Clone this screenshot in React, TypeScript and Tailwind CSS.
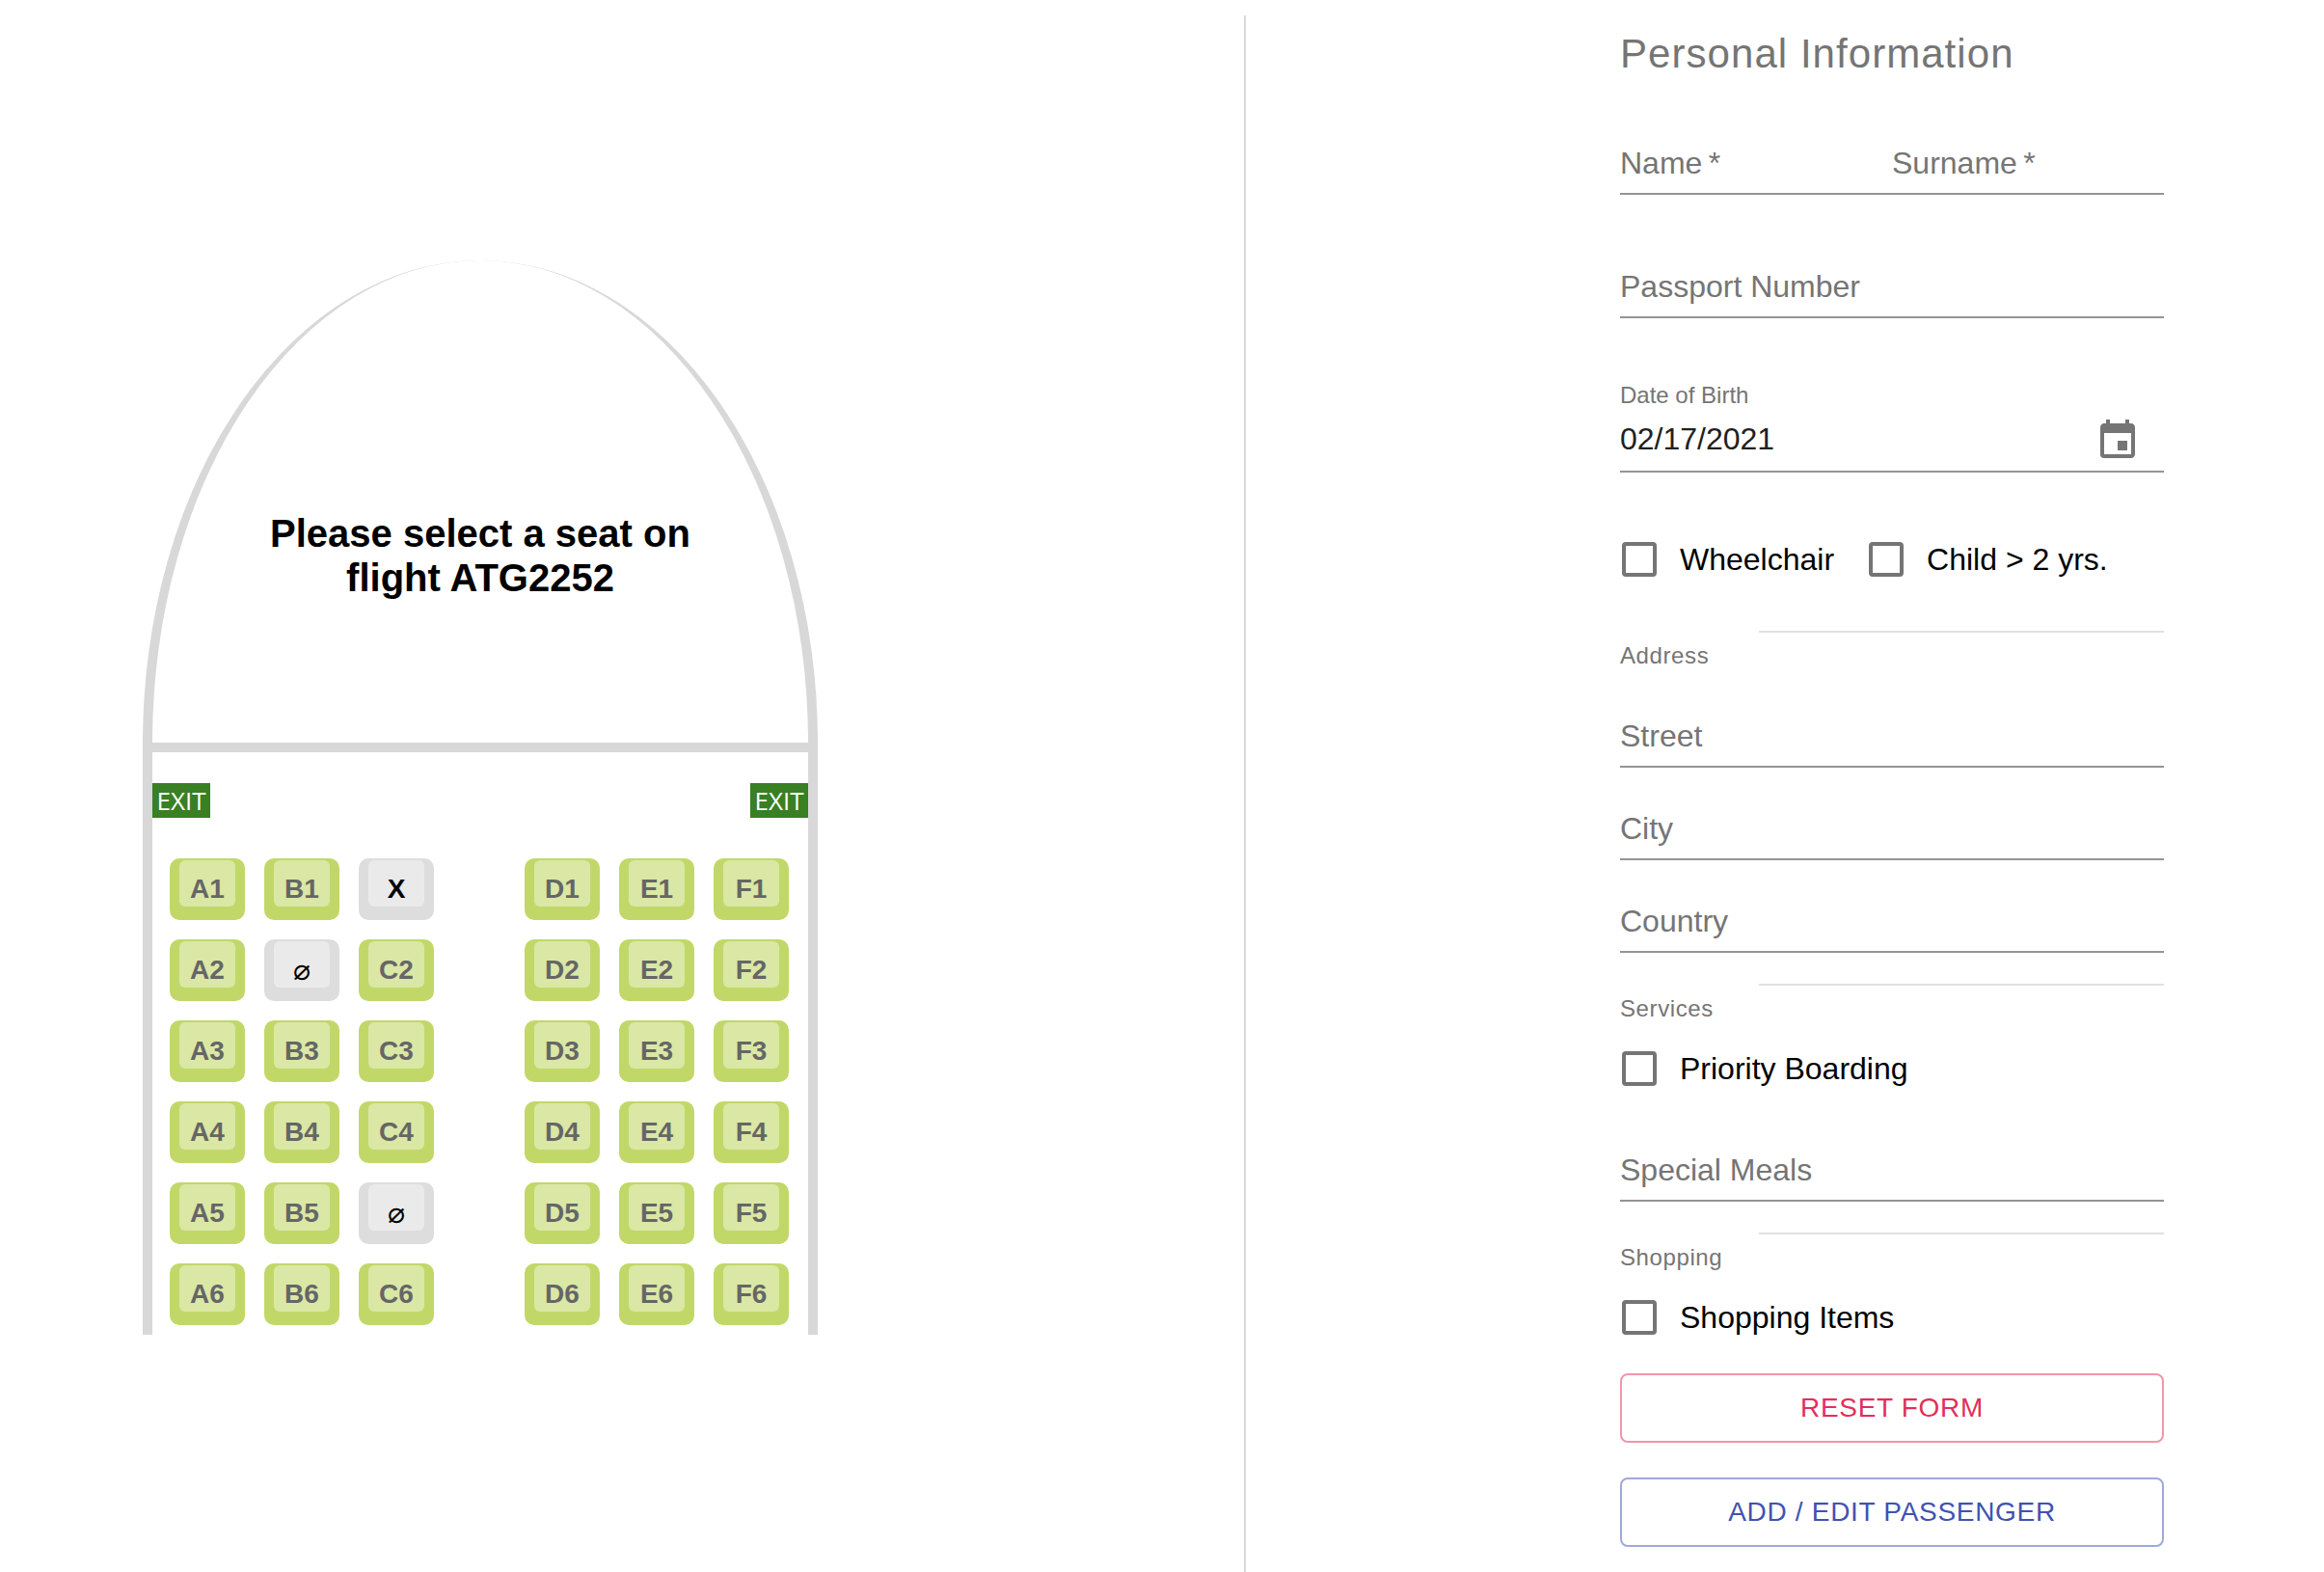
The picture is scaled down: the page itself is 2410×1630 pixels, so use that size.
import React from "react";
import { MdEvent } from "react-icons/md";

type SeatState = "free" | "taken" | "blocked";

const ROWS = [1, 2, 3, 4, 5, 6];
const LEFT_COLUMNS = ["A", "B", "C"];
const RIGHT_COLUMNS = ["D", "E", "F"];

const UNAVAILABLE: Record<string, SeatState> = {
  C1: "taken",
  B2: "blocked",
  C5: "blocked",
};

function Seat({ id }: { id: string }) {
  const state = UNAVAILABLE[id] ?? "free";
  const free = state === "free";
  return (
    <label
      className={
        free
          ? "relative flex h-16 w-[78px] cursor-pointer justify-center rounded-[10px] bg-[#c1d869] pt-0.5 text-[#666666]"
          : "relative flex h-16 w-[78px] justify-center rounded-[10px] bg-[#dddddd] pt-0.5 text-black"
      }
    >
      <input type="checkbox" name="seat" value={id} disabled={!free} aria-label={`Seat ${id}`} className="sr-only" />
      <span className="flex h-12 w-[58px] items-end justify-center rounded-md bg-white/40">
        {state === "blocked" ? (
          <span className="font-['DejaVu_Sans',sans-serif] text-[30px] leading-9">⌀</span>
        ) : (
          <span className="text-[28px] leading-9 font-bold">{state === "taken" ? "X" : id}</span>
        )}
      </span>
    </label>
  );
}

function ExitSign() {
  return (
    <span className="flex h-9 w-[60px] items-center justify-center bg-[#388023] font-['Open_Sans',sans-serif] text-[26px] leading-9 text-white">
      EXIT
    </span>
  );
}

function Plane() {
  return (
    <div className="w-[700px]">
      <div className="flex h-[510px] justify-center border-x-[10px] border-b-[10px] border-[#d8d8d8] pt-[260px] [border-radius:50%_50%_0_0/500px_500px_0_0]">
        <h1 className="w-[480px] text-center text-[40px] leading-[46px] font-bold text-black">
          Please select a seat on flight ATG2252
        </h1>
      </div>
      <div className="border-x-[10px] border-[#d8d8d8] pt-8">
        <div className="flex justify-between">
          <ExitSign />
          <ExitSign />
        </div>
        <ol className="pt-8">
          {ROWS.map((row) => (
            <li key={row} className="flex justify-between py-2.5 pr-5 pl-[18px]">
              <div className="flex gap-5">
                {LEFT_COLUMNS.map((c) => (
                  <Seat key={c} id={`${c}${row}`} />
                ))}
              </div>
              <div className="flex gap-5">
                {RIGHT_COLUMNS.map((c) => (
                  <Seat key={c} id={`${c}${row}`} />
                ))}
              </div>
            </li>
          ))}
        </ol>
      </div>
    </div>
  );
}

function Field({ label, name, required }: { label: string; name: string; required?: boolean }) {
  return (
    <label className="grid h-16 grow basis-0 cursor-text border-b-2 border-[#949494] pt-3 text-[32px] leading-[38px] text-[#757575]">
      <span className="[grid-area:1/1]">
        {label}
        {required ? "\u2009*" : ""}
      </span>
      <input
        type="text"
        name={name}
        required={required}
        className="h-[38px] w-full min-w-0 bg-transparent text-black/85 outline-none [grid-area:1/1]"
      />
    </label>
  );
}

function Check({ label, name }: { label: string; name: string }) {
  return (
    <label className="flex h-12 cursor-pointer items-center gap-6 text-[32px] leading-[48px] text-black">
      <input
        type="checkbox"
        name={name}
        className="size-9 shrink-0 appearance-none rounded-[4px] border-4 border-[#757575] checked:bg-[#757575]"
      />
      {label}
    </label>
  );
}

function SectionTitle({ children }: { children: React.ReactNode }) {
  return (
    <div>
      <hr className="ml-36 border-t-2 border-[#e0e0e0]" />
      <h3 className="mt-1 text-2xl leading-10 tracking-wide text-[#757575]">{children}</h3>
    </div>
  );
}

function PassengerForm() {
  return (
    <form className="flex w-[564px] flex-col" onSubmit={(e) => e.preventDefault()}>
      <h2 className="text-[42px] leading-[64px] tracking-wide text-[#757575]">Personal Information</h2>

      <div className="mt-[50px] flex">
        <Field label="Name" name="name" required />
        <Field label="Surname" name="surname" required />
      </div>
      <div className="mt-16 flex">
        <Field label="Passport Number" name="passport" />
      </div>

      <label htmlFor="birth" className="mt-[68px] text-2xl leading-6 text-[#757575]">
        Date of Birth
      </label>
      <div className="mt-1 flex h-16 items-center border-b-2 border-[#949494] pr-6">
        <input
          id="birth"
          type="text"
          defaultValue="02/17/2021"
          className="h-full w-0 grow bg-transparent pb-1 text-[32px] text-[#212121] outline-none"
        />
        <button type="button" aria-label="Change date" className="text-[#757575]">
          <MdEvent className="size-12" />
        </button>
      </div>

      <div className="mt-[66px] flex gap-9 pl-0.5">
        <Check label="Wheelchair" name="wheelchair" />
        <Check label="Child > 2 yrs." name="child" />
      </div>

      <div className="mt-[50px] flex flex-col gap-8">
        <SectionTitle>Address</SectionTitle>
        <div className="flex">
          <Field label="Street" name="street" />
        </div>
        <div className="flex">
          <Field label="City" name="city" />
        </div>
        <div className="flex">
          <Field label="Country" name="country" />
        </div>
        <SectionTitle>Services</SectionTitle>
      </div>

      <div className="mt-[18px] pl-0.5">
        <Check label="Priority Boarding" name="priority" />
      </div>

      <div className="mt-[50px] flex flex-col gap-8">
        <div className="flex">
          <Field label="Special Meals" name="meals" />
        </div>
        <SectionTitle>Shopping</SectionTitle>
      </div>

      <div className="mt-[18px] pl-0.5">
        <Check label="Shopping Items" name="shopping" />
      </div>

      <div className="mt-[34px] flex flex-col gap-9">
        <button
          type="reset"
          className="h-[72px] rounded-lg border-2 border-[#f096ab] text-[28px] tracking-wide text-[#e22f59] uppercase"
        >
          Reset Form
        </button>
        <button
          type="submit"
          className="h-[72px] rounded-lg border-2 border-[#9fa8da] text-[28px] tracking-wide text-[#4152b0] uppercase"
        >
          Add / Edit Passenger
        </button>
      </div>
    </form>
  );
}

export default function App() {
  return (
    <main className="grid min-h-screen grid-cols-[1290fr_1120fr] bg-white pt-4 font-['Liberation_Sans',Arial,sans-serif]">
      <section className="pt-[254px] pl-[148px]">
        <Plane />
      </section>
      <section className="flex justify-end border-l-2 border-[#d8d8d8] pt-2 pr-[166px] pb-6">
        <PassengerForm />
      </section>
    </main>
  );
}
